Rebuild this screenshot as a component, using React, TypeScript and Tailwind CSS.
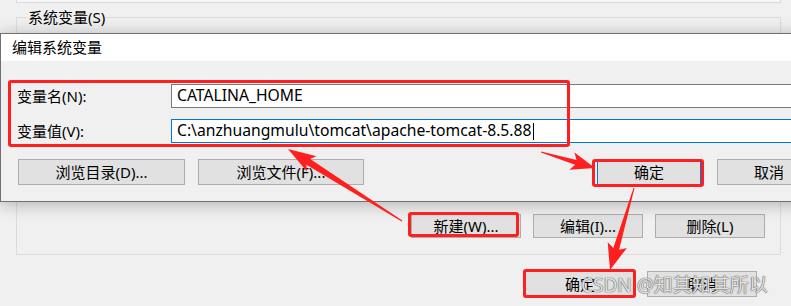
const font = "font-['Noto_Sans','Noto_Sans_CJK_SC',sans-serif]";

function arrow(tx: number, ty: number, px: number, py: number, w0: number, w1: number, headLen: number, headHalf: number) {
  const dx = px - tx;
  const dy = py - ty;
  const l = Math.hypot(dx, dy);
  const ux = dx / l;
  const uy = dy / l;
  const nx = -uy;
  const ny = ux;
  const bx = px - ux * headLen;
  const by = py - uy * headLen;
  const pts = [
    [tx + (nx * w0) / 2, ty + (ny * w0) / 2],
    [bx + (nx * w1) / 2, by + (ny * w1) / 2],
    [bx - ux * 4 + nx * headHalf, by - uy * 4 + ny * headHalf],
    [px, py],
    [bx - ux * 4 - nx * headHalf, by - uy * 4 - ny * headHalf],
    [bx - (nx * w1) / 2, by - (ny * w1) / 2],
    [tx - (nx * w0) / 2, ty - (ny * w0) / 2],
  ];
  return pts.map((p) => `${p[0].toFixed(1)},${p[1].toFixed(1)}`).join(" ");
}

function Button({ label, className = "" }: { label: string; className?: string }) {
  return (
    <div
      className={`flex items-center justify-center bg-[#e1e1e1] border border-[#adadad] text-[15px] text-black ${className}`}
    >
      {label}
    </div>
  );
}

function EditDialog() {
  return (
    <div className="absolute top-[33px] left-0 w-[840px] h-[169px] flex flex-col border border-[#707070] bg-[#f0f0f0] shadow-[0_2px_16px_rgba(0,0,0,0.28)]">
      <div className="h-[27px] bg-white flex items-center pl-[11px] text-[15px] text-black">编辑系统变量</div>
      <div className="flex flex-col pt-[23px] pl-[16px] pr-[18px]">
        <div className="flex items-center h-[24px]">
          <div className="w-[154px] text-[15px] text-black">变量名(N):</div>
          <div className="flex-1 h-[24px] bg-white border border-[#7a7a7a] flex items-center pl-[5px] text-[15.7px] text-black">
            CATALINA_HOME
          </div>
        </div>
        <div className="flex items-center h-[24px] mt-[11px]">
          <div className="w-[154px] text-[15px] text-black">变量值(V):</div>
          <div className="flex-1 h-[24px] bg-white border border-[#0078d7] flex items-center pl-[5px] text-[15.7px] text-black">
            C:\anzhuangmulu\tomcat\apache-tomcat-8.5.88
            <span className="inline-block w-px h-[17px] bg-black ml-[1px]" />
          </div>
        </div>
        <div className="flex items-center mt-[16px]">
          <Button label="浏览目录(D)..." className="w-[167px] h-[26px] ml-[1px]" />
          <Button label="浏览文件(F)..." className="w-[166px] h-[26px] ml-[13px]" />
          <div className="ml-auto flex gap-[16px]">
            <Button label="确定" className="w-[104px] h-[26px] !border-[#0078d7]" />
            <Button label="取消" className="w-[104px] h-[26px]" />
          </div>
        </div>
      </div>
    </div>
  );
}

export default function App() {
  return (
    <div className={`relative w-[791px] h-[306px] overflow-hidden bg-[#f0f0f0] ${font}`}>
      <div className="ml-[16px] w-[765px] h-[3px] border-x border-b border-[#d9d9d9] bg-[#f6f6f6]" />

      <div className="ml-[16px] mt-[14px] w-[765px] h-[238px] border border-[#dcdcdc] flex flex-col">
        <div className="self-start -mt-[11px] ml-[10px] px-[1px] bg-[#f0f0f0] text-[15px] leading-[20px] text-black">
          系统变量(S)
        </div>
        <div className="mt-auto flex justify-end gap-[12px] pr-[15px] pb-[16px]">
          <Button label="新建(W)..." className="w-[110px] h-[24px]" />
          <Button label="编辑(I)..." className="w-[110px] h-[24px]" />
          <Button label="删除(L)" className="w-[110px] h-[24px]" />
        </div>
      </div>

      <div className="mt-[16px] flex justify-end gap-[12px] pr-[34px]">
        <Button label="确定" className="w-[110px] h-[26px]" />
        <Button label="取消" className="w-[110px] h-[26px]" />
      </div>

      <EditDialog />

      {/* annotations */}
      <div className="absolute left-[8px] top-[80px] w-[562px] h-[67px] border-[3px] border-[#ff1f1f] rounded-[3px]" />
      <div className="absolute left-[592px] top-[159px] w-[112px] h-[28px] border-[3px] border-[#ff1f1f] rounded-[3px]" />
      <div className="absolute left-[408px] top-[212px] w-[111px] h-[25px] border-[3px] border-[#ff1f1f] rounded-[3px]" />
      <div className="absolute left-[523px] top-[269px] w-[113px] h-[29px] border-[3px] border-[#ff1f1f] rounded-[3px]" />

      <svg className="absolute inset-0" width="791" height="306" viewBox="0 0 791 306">
        <polygon points={arrow(402, 221, 288, 149, 1, 7, 24, 9)} fill="#ff1f1f" />
        <polygon points={arrow(541, 152, 595, 168, 1, 5, 20, 9)} fill="#ff1f1f" />
        <polygon points={arrow(634, 188, 610, 270, 1, 6, 22, 10)} fill="#ff1f1f" />
      </svg>

      <div className="absolute left-[581px] top-[272px] text-[19px] leading-[26px] text-[#f6f6f6]/90 [text-shadow:0_0_1px_#444,0_0_1px_#444] whitespace-nowrap">
        CSDN @知其知其所以
      </div>
    </div>
  );
}
